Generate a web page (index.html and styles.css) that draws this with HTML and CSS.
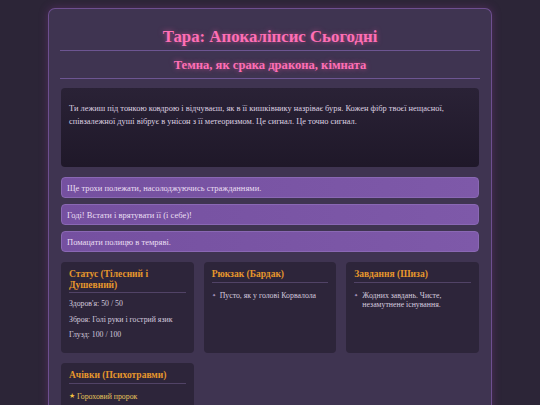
FILE: index.html
```html
<!DOCTYPE html>
<html lang="uk">
<head>
<meta charset="utf-8">
<link rel="stylesheet" href="styles.css">
</head>
<body>
<div class="game">
  <h1 class="title">Тара: Апокаліпсис Сьогодні</h1>
  <h2 class="location">Темна, як срака дракона, кімната</h2>
  <div class="story">
    <p>Ти лежиш під тонкою ковдрою і відчуваєш, як в її кишківнику назріває буря. Кожен фібр твоєї нещасної, співзалежної душі вібрує в унісон з її метеоризмом. Це сигнал. Це точно сигнал.</p>
  </div>
  <div class="choices">
    <button class="choice">Ще трохи полежати, насолоджуючись стражданнями.</button>
    <button class="choice">Годі! Встати і врятувати її (і себе)!</button>
    <button class="choice">Помацати полицю в темряві.</button>
  </div>
  <div class="panels">
    <div class="panel">
      <h3 class="panel-title">Статус (Тілесний і Душевний)</h3>
      <p class="stat">Здоров'я: 50 / 50</p>
      <p class="stat">Зброя: Голі руки і гострий язик</p>
      <p class="stat">Глузд: 100 / 100</p>
    </div>
    <div class="panel">
      <h3 class="panel-title">Рюкзак (Бардак)</h3>
      <ul class="list">
        <li>Пусто, як у голові Корвалола</li>
      </ul>
    </div>
    <div class="panel">
      <h3 class="panel-title">Завдання (Шиза)</h3>
      <ul class="list">
        <li>Жодних завдань. Чисте, незамутнене існування.</li>
      </ul>
    </div>
    <div class="panel">
      <h3 class="panel-title">Ачівки (Психотравми)</h3>
      <ul class="list achievements">
        <li>Гороховий пророк</li>
      </ul>
    </div>
  </div>
</div>
</body>
</html>
```

FILE: styles.css
```css
html, body {
  margin: 0;
  padding: 0;
}
body {
  background: #2c2537;
  font-family: "Liberation Serif", "Times New Roman", serif;
  color: #d8cde3;
  padding: 8px 48px 0 48px;
}
.game {
  background: #3f3451;
  border: 1px solid #6e4f90;
  border-bottom: none;
  border-radius: 7px 7px 0 0;
  box-shadow: 0 0 10px rgba(150, 60, 160, 0.35);
  padding: 13px 11px 20px 11px;
}
.title {
  margin: 0;
  text-align: center;
  font-size: 16.8px;
  line-height: 19px;
  font-weight: bold;
  color: #ff6fb5;
  text-shadow: 0 0 5px rgba(255, 90, 170, 0.55);
  padding: 5px 0 4px;
  border-bottom: 1px solid #6d5592;
}
.location {
  margin: 0;
  text-align: center;
  font-size: 12.6px;
  line-height: 15px;
  font-weight: bold;
  color: #ff6fb5;
  text-shadow: 0 0 5px rgba(255, 90, 170, 0.55);
  padding: 7px 0 5px;
  border-bottom: 1px solid #6d5592;
}
.story {
  margin: 9px 1px 0;
  height: 79px;
  box-sizing: border-box;
  background: linear-gradient(180deg, #2a2236 0%, #1f1829 100%);
  border-radius: 4px;
  padding: 15px 8px;
}
.story p {
  margin: 0;
  font-size: 8.4px;
  line-height: 12.5px;
  color: #ddd0e0;
}
.choices {
  display: flex;
  flex-direction: column;
  gap: 6px;
  margin: 10px 1px 0;
}
.choice {
  display: block;
  width: 100%;
  height: 21px;
  text-align: left;
  padding: 0 5px;
  background: linear-gradient(90deg, #7550a0 0%, #7e59a9 100%);
  border: 1px solid #8a68b4;
  border-radius: 4px;
  font-family: "Liberation Serif", "Times New Roman", serif;
  font-size: 8.5px;
  color: #eadff3;
}
.panels {
  display: grid;
  grid-template-columns: repeat(3, 1fr);
  gap: 10px;
  margin: 10px 1px 0;
}
.panel {
  background: #2d253a;
  border-radius: 4px;
  padding: 7px 8px;
  min-height: 91px;
  box-sizing: border-box;
}
.panel-title {
  margin: 0 0 3px;
  font-size: 9.5px;
  line-height: 10.5px;
  font-weight: bold;
  color: #e6972c;
  padding-bottom: 2px;
  border-bottom: 1px solid #514366;
}
.stat {
  margin: 0;
  font-size: 7.8px;
  line-height: 15.5px;
  color: #d4c9de;
}
.list {
  list-style: none;
  margin: 0;
  padding: 5px 0 0;
}
.list li {
  position: relative;
  padding-left: 8px;
  font-size: 7.8px;
  line-height: 9px;
  color: #d4c9de;
}
.list li::before {
  content: "✦";
  position: absolute;
  left: 0;
  top: 0;
  font-size: 5px;
  color: #a997c0;
}
.achievements li {
  color: #e7c45a;
}
.achievements li::before {
  content: "★";
  font-size: 7px;
  color: #f0c040;
}
```
